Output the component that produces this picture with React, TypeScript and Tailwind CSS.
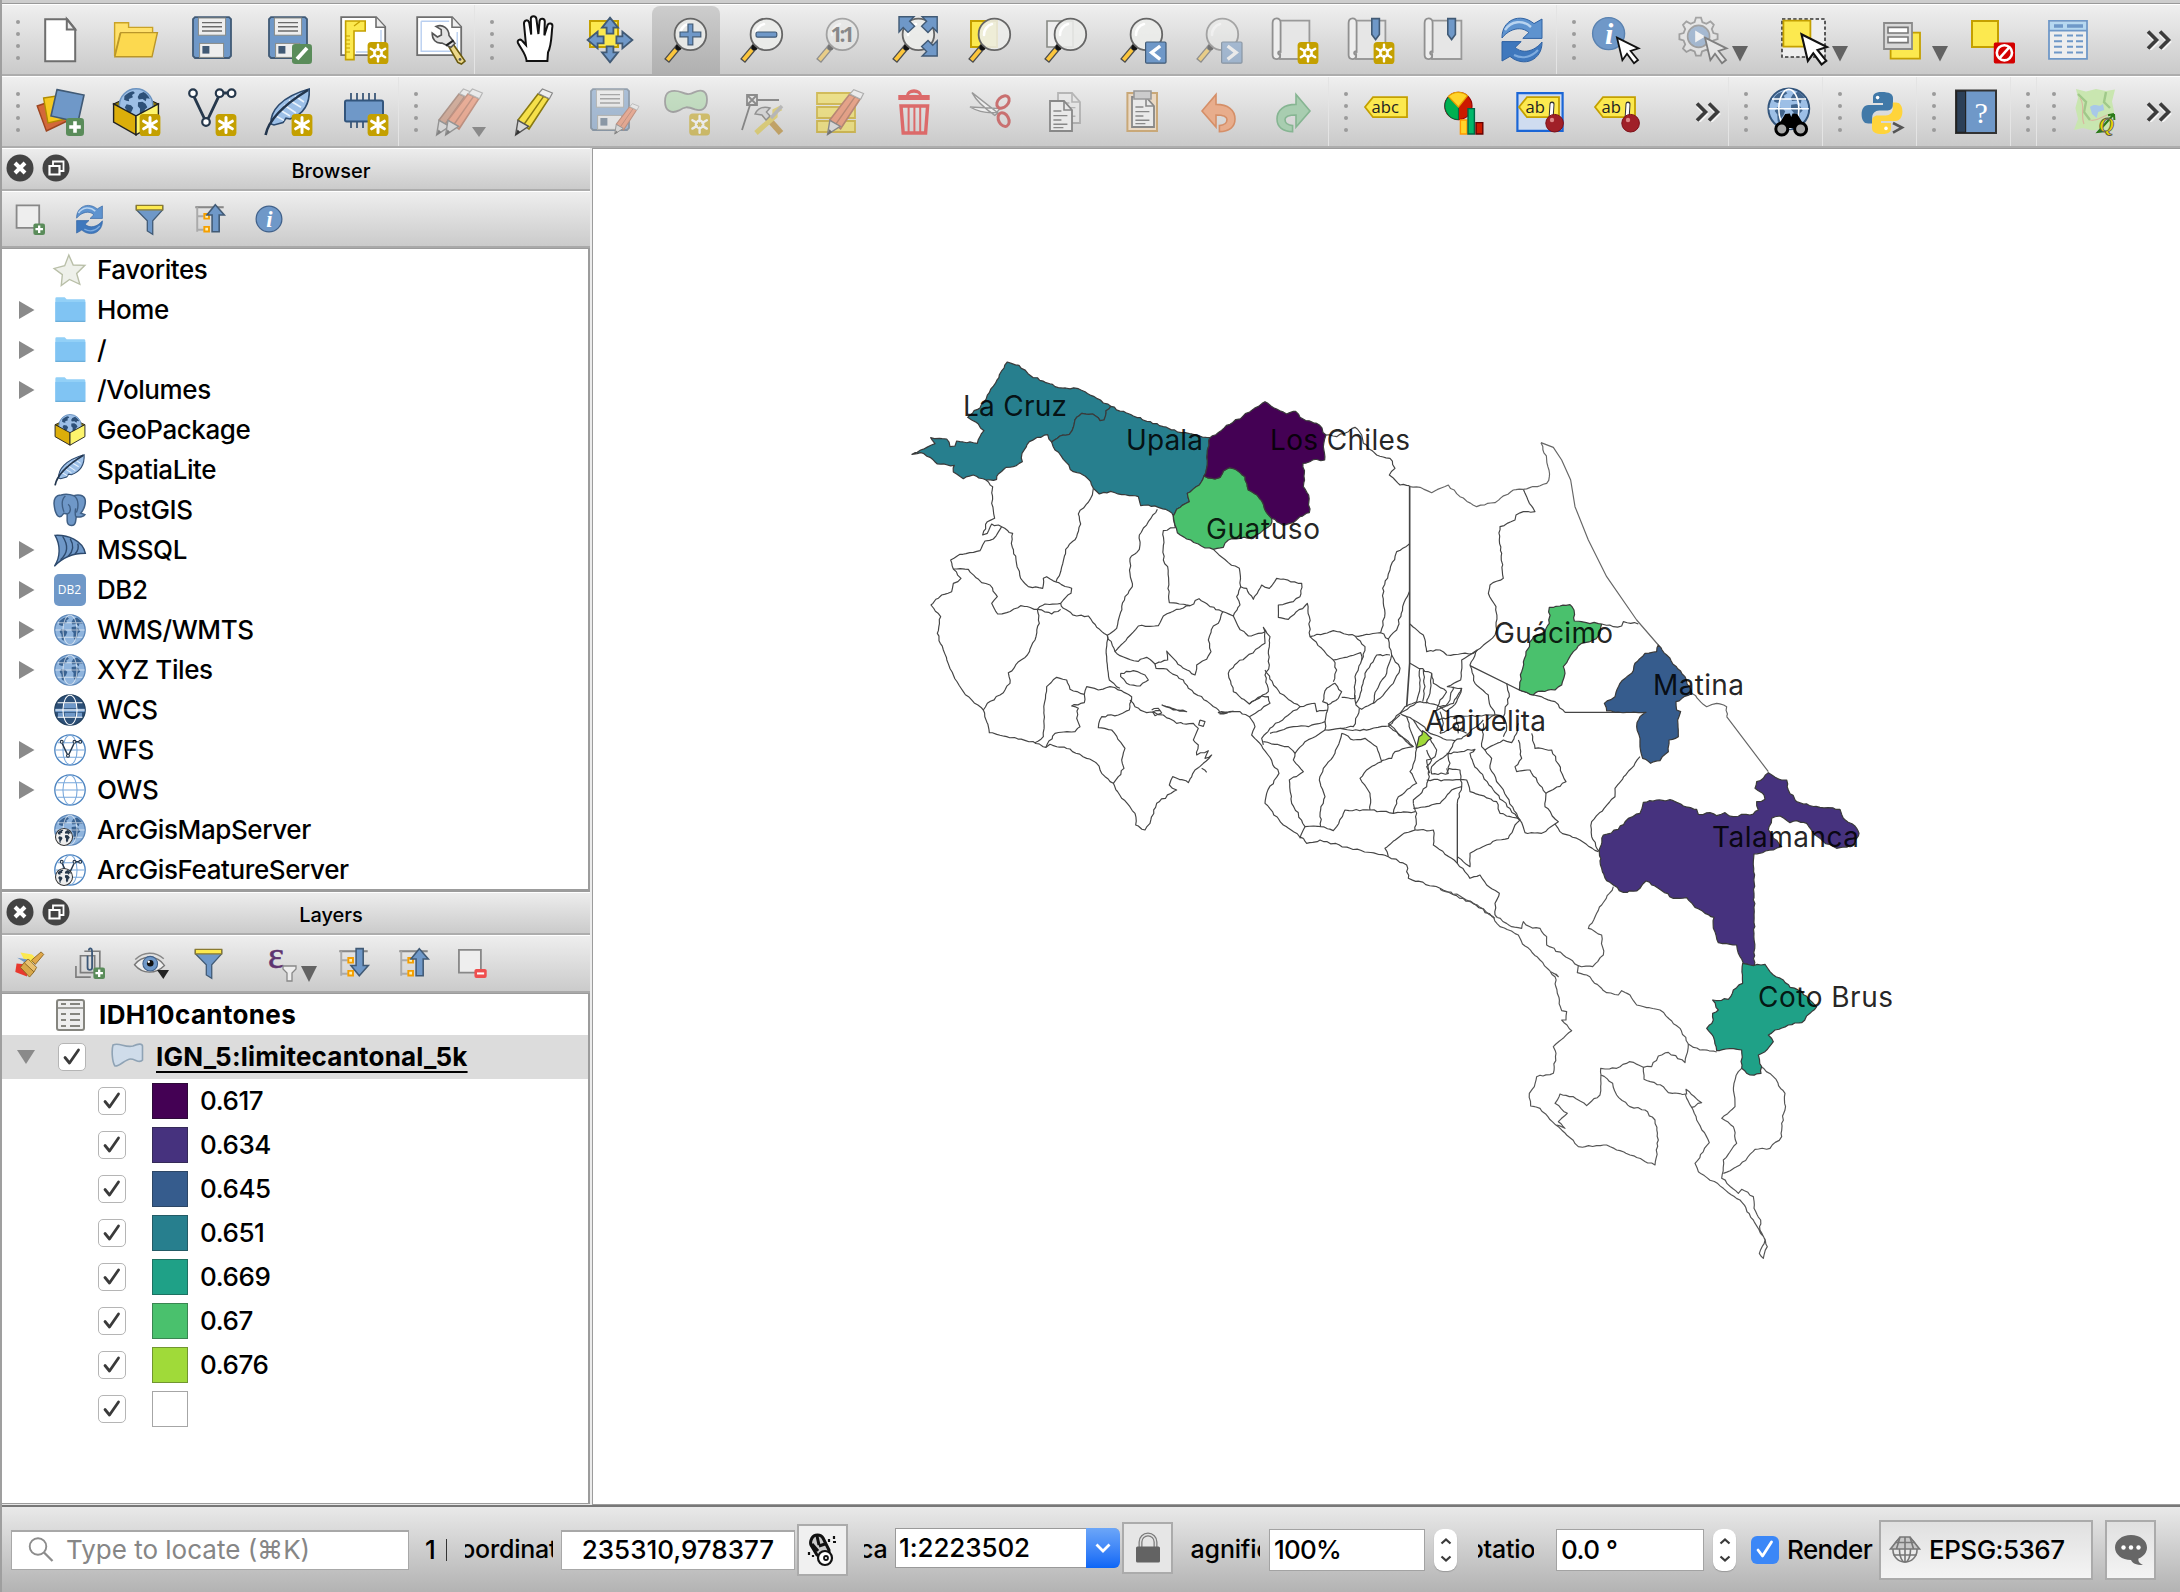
import React from "react";

type IconProps = { size?: number; className?: string };
type Pt = [number, number];

/* ------------------------------------------------------------------ */
/* Icons                                                               */
/* ------------------------------------------------------------------ */

function Svg({ size = 48, className = "", children }: IconProps & { children: React.ReactNode }) {
  return (
    <svg width={size} height={size} viewBox="0 0 24 24" fill="none" className={"shrink-0 overflow-visible " + className}>
      {children}
    </svg>
  );
}

function StarBadge({ solid = false }: { solid?: boolean }) {
  return (
    <g>
      <rect x="13.8" y="13" width="10.4" height="11" rx="1.8" fill="#c4a000" />
      {solid ? (
        <path d="M19 14.8v7.4M15.8 16.6l6.4 3.8M22.2 16.6l-6.4 3.8" stroke="#fff" strokeWidth="1.5" strokeLinecap="round" />
      ) : (
        <g stroke="#fff">
          <path d="M19 14.3v2.6M19 20.1v2.6M15.4 16.4l2.2 1.3M20.4 19.3l2.2 1.3M22.6 16.4l-2.2 1.3M17.6 19.3l-2.2 1.3" strokeWidth="1.2" strokeLinecap="round" />
          <circle cx="19" cy="18.5" r="1.9" strokeWidth="1.1" />
        </g>
      )}
    </g>
  );
}

function PlusBadge() {
  return (
    <g>
      <rect x="15" y="15" width="9" height="9" rx="1.6" fill="#5a8c5a" />
      <path d="M19.5 16.6v5.8M16.6 19.5h5.8" stroke="#fff" strokeWidth="1.8" />
    </g>
  );
}

const NewIcon = () => (
  <Svg>
    <path d="M4.6 1.6h11l4 5v16h-15z" fill="#fff" stroke="#6e6e6e" strokeWidth="1" />
    <path d="M15.4 1.6v5.2h4.2z" fill="#eee" stroke="#6e6e6e" strokeWidth="1" />
  </Svg>
);

const FolderOpenIcon = () => (
  <Svg>
    <path d="M1.3 20V3.4h7v2.3h12v3H4z" fill="#ffe16b" stroke="#c9a227" strokeWidth=".7" />
    <path d="M1.4 20.4 4.4 8.3h18.3L20 20.4z" fill="#fcd94f" stroke="#b9962a" strokeWidth=".7" />
  </Svg>
);

function Floppy({ children }: { children?: React.ReactNode }) {
  return (
    <Svg>
      <path d="M3.5.6h17l1 1V20l-1 1h-17l-1-1V1.600z" fill="#6f98c8" stroke="#415a75" strokeWidth=".9" />
      <rect x="5.2" y="1" width="13.6" height="8.6" fill="#eee" stroke="#888a85" strokeWidth=".5" />
      <path d="M7 3.3h10M7 5.4h10M7 7.500h10" stroke="#6b6b6b" strokeWidth=".7" />
      <rect x="5.800" y="13.700" width="12" height="7" fill="#eee" stroke="#888a85" strokeWidth=".5" />
      <rect x="7.200" y="15" width="3.500" height="3.800" fill="#415a75" />
      {children}
    </Svg>
  );
}

const SaveIcon = () => <Floppy />;
const SaveAsIcon = () => (
  <Floppy>
    <rect x="14" y="14" width="10" height="10" rx="1.600" fill="#5a8c5a" />
    <path d="M16.500 21.500 21.500 16" stroke="#fff" strokeWidth="1.900" />
  </Floppy>
);

const LayoutIcon = () => (
  <Svg>
    <path d="M.6.6h17.500l4.500 4.800v14.200H.6z" fill="#fff" stroke="#6e6e6e" strokeWidth=".9" />
    <path d="M18 .8v4.800h4.500" stroke="#6e6e6e" strokeWidth=".8" fill="#eee" />
    <path d="M20.500 7v11H8" stroke="#b9cff0" strokeWidth=".7" />
    <path d="M2.800 2.500h9.800v5H7v14.300H2.800z" fill="#fce94f" stroke="#c4a000" strokeWidth=".8" />
    <path d="M3 10h2M3 12h2M3 14h2M3 16h2M3 18h2M7 5l3-2.300" stroke="#c4a000" strokeWidth=".6" />
    <StarBadge />
  </Svg>
);

const LayoutManagerIcon = () => (
  <Svg>
    <path d="M.6.6h17.500l4.500 4.800v14.200H.6z" fill="#fff" stroke="#6e6e6e" strokeWidth=".9" />
    <path d="M18 .8v4.800h4.500" stroke="#6e6e6e" strokeWidth=".8" fill="#eee" />
    <path d="M2.600 2.600h14M2.600 2.600v15h18V8" stroke="#b9cff0" strokeWidth=".7" />
    <path d="m14.500 12 4 2 6 8.500-1.800 1.500-1.800-.8z" fill="#edd98a" stroke="#6a5a10" strokeWidth=".8" />
    <path d="M13 13.500c-3 .4-5-1.800-4.900-5l2.600 2 2-1-.1-2.700L10 5.200c3.500-1.300 6.500 1 6.500 4.500l3 4-2 2z" fill="#e4e4e4" stroke="#555" strokeWidth=".8" />
    <path d="m15 14.800 3.800-2.600" stroke="#222" strokeWidth="1.100" />
    <circle cx="22" cy="21.700" r=".7" fill="#555" />
  </Svg>
);

const HandIcon = () => (
  <Svg className="ml-1">
    <path
      d="M7.300 22.500C7 19 4.500 16.500 3 13.500c-.7-1.500 1.200-2.300 2.200-1L7 14.500 6 4c-.1-2 2-2.500 2.600-.7l1 6L9.400 1.400c0-1.700 2.600-1.800 2.800 0l1 7.600.6-6.500c.3-1.600 2.500-1.500 2.600.2l-.2 7 1.600-5.200c.6-1.300 2.600-.9 2.400.7-.6 4-.2 9-2.200 13l-.3 4.300z"
      fill="#fff" stroke="#111" strokeWidth="1"
    />
  </Svg>
);

const PanIcon = () => (
  <Svg>
    <path d="M2 2.500h14v13H2z" fill="#fce94f" stroke="#c4a000" strokeWidth="1" />
    <path
      d="m12 .8 4 5h-2.300v3h-3.400v-3H8zM12 23.200l4-5h-2.300v-3h-3.400v3H8zM.8 12l5-4.200v2.400h3v3.500h-3v2.500zM23.200 12l-5-4.200v2.400h-3v3.500h3v2.500z"
      fill="#6f98c8" stroke="#415a75" strokeWidth=".9"
    />
  </Svg>
);

function Glass({ children, under, faded = false }: { children?: React.ReactNode; under?: React.ReactNode; faded?: boolean }) {
  return (
    <Svg className={faded ? "opacity-50" : ""}>
      {under}
      <path d="M9 14.500 2.300 22.500" stroke="#4a4a4a" strokeWidth="3.200" />
      <path d="M7 16.900 2.700 22" stroke="#fcc63c" strokeWidth="1.900" />
      <circle cx="8.300" cy="15.600" r="1.500" fill="#111" />
      <circle cx="14.200" cy="9.200" r="7.900" fill="#ecedeb" fillOpacity=".88" stroke="#666" strokeWidth=".9" />
      <path d="M9 9.500a5.500 5.500 0 0 1 4-5.500" stroke="#fff" strokeWidth="1.300" strokeLinecap="round" />
      {children}
    </Svg>
  );
}

const ZoomInIcon = () => (
  <Glass>
    <path d="M13 4h2.400v4h4v2.400h-4v4H13v-4H9V8h4z" fill="#6f98c8" stroke="#415a75" strokeWidth=".6" />
  </Glass>
);
const ZoomOutIcon = () => (
  <Glass>
    <rect x="9" y="8" width="10.400" height="2.600" rx=".8" fill="#6f98c8" stroke="#415a75" strokeWidth=".6" />
  </Glass>
);
const ZoomNativeIcon = () => (
  <Glass faded>
    <text x="14.200" y="13" textAnchor="middle" fontSize="10.500" fontWeight="700" fontFamily="Open Sans, sans-serif" textLength="12" fill="#333">1:1</text>
  </Glass>
);
const ZoomFullIcon = () => (
  <Glass>
    <g fill="#6f98c8" stroke="#415a75" strokeWidth=".7">
      <path d="M4.500.4h7.500L9.800 2.600l2.500 2.500L9 8.200 6.600 5.800 4.500 8z" />
      <path d="M23.600.4h-7.500l2.200 2.200-2.500 2.500L19 8.200l2.400-2.400L23.600 8z" />
      <path d="M23.600 20h-7.500l2.200-2.200-2.500-2.500L19 12.200l2.400 2.400 2.200-2.200z" />
    </g>
  </Glass>
);
const ZoomSelectionIcon = () => (
  <Glass under={<path d="M2.500 2.500h13v13h-13z" fill="#fce94f" stroke="#c4a000" strokeWidth="1" />} />
);
const ZoomLayerIcon = () => (
  <Glass under={<path d="M2.500 2.500h13v13h-13z" fill="#eee" stroke="#888a85" strokeWidth=".8" />} />
);
function ZoomHistory({ faded = false }: { faded?: boolean }) {
  return (
    <Glass faded={faded}>
      <rect x="13.800" y="13" width="10.200" height="10.600" rx=".6" fill="#6f98c8" stroke="#415a75" strokeWidth=".6" />
      <path d={faded ? "m16.800 15 4.300 3.300-4.300 3.400" : "m21.100 15-4.300 3.300 4.300 3.400"} stroke="#fff" strokeWidth="1.700" />
    </Glass>
  );
}

function MapSheet({ bookmark = false, badge = false }: { bookmark?: boolean; badge?: boolean }) {
  return (
    <Svg className="ml-0.5">
      <path d="M4.500 2.300h14.700V21.500H4.500z" fill="#e6e6e6" stroke="#999" strokeWidth=".9" />
      <path d="M.8 19.500V3.500C.8.500 4.800.4 4.800 3.300V17.800c-1.500-.6-1.700 1.500-.2 1.700.2 2.800-3.800 2.600-3.800 0z" fill="#eee" stroke="#909090" strokeWidth=".9" />
      {bookmark && <path d="M12.400 1.300h3.800v8l-1.900 2.500-1.900-2.500z" fill="#6f98c8" stroke="#415a75" strokeWidth=".8" />}
      {badge && <g transform="translate(-.5 0)"><StarBadge /></g>}
    </Svg>
  );
}

function RefreshIcon({ size }: IconProps) {
  return (
    <Svg size={size}>
      <path d="M2 11C1.800 2 11-2 18 3.800L22 1.500v9.700h-9.600l3-2.900C12 5 6 6 2 11z" fill="#5e93cf" stroke="#2f62a3" strokeWidth=".5" />
      <path d="M22 13c.2 9-9 13-16 7.200L2 22.500v-9.700h9.600l-3 2.900c3.400 3.300 9.400 2.300 13.400-2.700z" fill="#3f78bd" stroke="#2f62a3" strokeWidth=".5" />
      <path d="M3.500 7C6.500 2.300 12.500 1.800 16.500 5.500" stroke="#b9d4f0" strokeWidth="1.200" />
      <path d="M8 19.500c4.500 2.300 9 .8 12-2.500" stroke="#7facdf" strokeWidth="1" />
    </Svg>
  );
}

const Cursor = ({ fill = "#fff", stroke = "#111" }: { fill?: string; stroke?: string }) => (
  <path d="m12.500 10.800 10.800 5.400-4 1.300 3.700 4.500-2 1.600-3.500-4.700-2.300 3.200z" fill={fill} stroke={stroke} strokeWidth=".9" />
);

const IdentifyIcon = () => (
  <Svg>
    <circle cx="8.300" cy="8.800" r="8" fill="#6f98c8" stroke="#5a82b0" strokeWidth=".7" />
    <text x="8.600" y="14.200" textAnchor="middle" fontSize="15" fontStyle="italic" fontWeight="700" fontFamily="Liberation Serif, serif" fill="#fff">i</text>
    <Cursor />
  </Svg>
);
const ActionIcon = () => (
  <Svg className="opacity-60">
    <path d="M8 .8h2.500l.7 2.300 2 .8 2-1.200 1.700 1.700-1 2.100.8 2 2.100.6v2.400l-2.100.7-.9 2 1 2.100-1.700 1.700-2-1.100-2.100.8-.6 2.100H8l-.7-2.100-2-.8-2.100 1.100-1.700-1.700 1.100-2.100-.8-2-2.100-.6V9.100l2.100-.6.800-2-1.100-2.100 1.700-1.700 2.100 1.200 2-.9z" fill="#e8e8e8" stroke="#777" strokeWidth=".9" />
    <circle cx="9.300" cy="10.200" r="5.500" fill="#7fa0c8" stroke="#777" strokeWidth=".8" />
    <path d="m7.600 7.300 5 3-5 3z" fill="#fff" />
    <Cursor fill="#eee" stroke="#444" />
  </Svg>
);
const SelectIcon = () => (
  <Svg>
    <path d="M1 1.500h21.500V20.500H1z" fill="#eee" stroke="#333" strokeWidth=".8" strokeDasharray="1.700 1.100" />
    <path d="M1.700 2.300h13.500v13H1.700z" fill="#fce94f" stroke="#c4a000" strokeWidth=".9" />
    <g transform="translate(-4 -3.600) scale(1.180)"><Cursor /></g>
  </Svg>
);
const SelectValueIcon = () => (
  <Svg>
    <path d="M5.300 8.300h14.700v13H5.300z" fill="#fce94f" stroke="#c4a000" strokeWidth=".9" />
    <path d="M2 3.500h14v13H2z" fill="#d8d8d8" stroke="#8a8a8a" strokeWidth=".9" />
    <path d="M4 5.700h10v2.800H4zM4 10.500h10v2.800H4z" fill="#fff" stroke="#777" strokeWidth=".8" />
  </Svg>
);
const DeselectIcon = () => (
  <Svg>
    <path d="M2 2.500h13v13H2z" fill="#fce94f" stroke="#c4a000" strokeWidth="1" />
    <rect x="12.900" y="13.200" width="10.600" height="10.500" rx=".8" fill="#d40000" />
    <circle cx="18.200" cy="18.400" r="3.800" stroke="#fff" strokeWidth="1.300" />
    <path d="m15.700 21.200 5-5.600" stroke="#fff" strokeWidth="1.300" />
  </Svg>
);
const TableIcon = () => (
  <Svg>
    <path d="M2.500 2.400h19v19h-19z" fill="#eee" stroke="#6f98c8" strokeWidth=".9" />
    <path d="M3 3h18v4H3z" fill="#b7d8f0" />
    <path d="M2.500 7.300h19" stroke="#6f98c8" strokeWidth=".8" />
    <path d="M5 5h4.500M11.500 5h8" stroke="#6f98c8" strokeWidth="1.800" />
    <path d="M5 9.800h4M11.500 9.800h3M16 9.800h3.500M5 12.600h4M11.500 12.600h3M16 12.600h3.500M5 15.400h4M11.500 15.400h3M16 15.400h3.500M5 18.300h4M11.500 18.300h3M16 18.300h3.500" stroke="#6f98c8" strokeWidth="1" />
  </Svg>
);

const AddLayerIcon = () => (
  <Svg>
    <path d="m.6 9 13-4.500 2 12L5.200 21.500z" fill="#d3683a" stroke="#9c4520" strokeWidth=".7" />
    <path d="m3.800 5 13-2 .5 12L6 17.500z" fill="#f5c920" stroke="#b08b00" strokeWidth=".7" />
    <path d="M10.500.8 24 3.500 21 17 7.500 14z" fill="#6f98c8" stroke="#415a75" strokeWidth=".8" />
    <PlusBadge />
  </Svg>
);

function Continents({ fill = "#2d5078" }: { fill?: string }) {
  return (
    <g fill={fill}>
      <path d="M4 5.500c1.800-2 4-3 6-3.300l1.200 1.300-2 1.300.6 1.500-2.800 1.200.2 1.500-1.800-.2L3.800 8zM5.500 11.200l3 .6 1.500 1.700-1 2.400-1.500 1.700-.3 2.700-1.400-1.300-.2-3.700-1.400-2z" />
      <path d="m14.300 4 2.800-1.300c2 1.100 3.500 2.600 4.300 4.700l-2.300-.3-.5 2-2.200-1.600-2.600.3-.7-1.700zM13.300 9.800l3-.4 2.100 1.400 1.300 2.300-1.700 1.600-.7 3-1.700 1.800-1.100-2.300.2-3-1.500-1.700z" />
    </g>
  );
}

function BoxIcon({ size, badge = false }: IconProps & { badge?: boolean }) {
  return (
    <Svg size={size}>
      <path d="M.8 8 5 6h14l4.200 2L12 14.200z" fill="#8a7400" stroke="#222" strokeWidth=".6" />
      <g transform="translate(3.300 0) scale(.73)">
        <circle cx="12" cy="12" r="11.500" fill="#9dbfe6" stroke="#6b93c0" strokeWidth="1" />
        <Continents />
      </g>
      <path d="M.8 8v9L12 23.400V14z" fill="#dcae0a" stroke="#222" strokeWidth=".7" />
      <path d="M23.200 8v9L12 23.400V14z" fill="#fdf46c" stroke="#222" strokeWidth=".7" />
      {badge && <StarBadge solid />}
    </Svg>
  );
}

function VectorNodes({ w = 1.1, r = 1.9 }: { w?: number; r?: number }) {
  return (
    <g stroke="#26384c" strokeWidth={w} fill="#fff">
      <path d="M3 4.300 8.300 15.500M15.300 4.300 10 15.500M16.500 2.500h4" strokeWidth={w * 1.300} />
      <circle cx="2.500" cy="2.600" r={r} />
      <circle cx="9" cy="17" r={r} />
      <circle cx="15.800" cy="2.600" r={r} />
      <circle cx="21.800" cy="2.600" r={r} />
    </g>
  );
}
const NewVectorIcon = () => (
  <Svg>
    <VectorNodes />
    <StarBadge solid />
  </Svg>
);
function FeatherIcon({ size, badge = false }: IconProps & { badge?: boolean }) {
  return (
    <Svg size={size}>
      <path d="M3.500 18C3 12 8 4.500 22.600.5c.4 7-2.600 12.500-9.600 15l-2-.4-1.500 2.200-4.500 1.200z" fill="#9dc0e8" stroke="#2d4a6e" strokeWidth=".8" />
      <path d="M8 11l5 3M10 8.500l6 4M12.500 6l6 3.600M15.500 4l4.500 3M6 14l4 2.200" stroke="#e8f2fc" strokeWidth=".8" />
      <path d="M.8 23.500C2 17 9 9 22 1" stroke="#22354d" strokeWidth="1.300" />
      {badge && <StarBadge solid />}
    </Svg>
  );
}
const ChipIcon = () => (
  <Svg>
    <path d="M5.500 2.500v4M8.500 2.500v4M11.500 2.500v4M14.500 2.500v4M17.500 2.500v4M5.500 16v4M8.500 16v4M11.500 16v4" stroke="#3c5878" strokeWidth=".9" />
    <rect x="2.500" y="6.300" width="19" height="10.400" rx=".8" fill="#6f98c8" stroke="#33557c" strokeWidth="1" />
    <StarBadge solid />
  </Svg>
);

function Pencil({ body, dark }: { body: string; dark: string }) {
  return (
    <g>
      <path d="m14 3 5.500 2.200L9.500 20.500 4 16z" fill={body} stroke={dark} strokeWidth=".8" />
      <path d="m16.800 4.200-10 14.300" stroke={dark} strokeWidth=".7" />
      <path d="m4 16.200 5.300 3-6.500 4.300z" fill="#d8d8d8" stroke="#555" strokeWidth=".7" />
      <path d="m3.800 20.800-1.200 3 2.600-1.700z" fill="#333" />
      <path d="m14.200 2.800 2-2.300 5 2-1.500 2.900z" fill="#eee" stroke="#888" strokeWidth=".6" />
    </g>
  );
}
const CurrentEditsIcon = () => (
  <Svg className="ml-1 opacity-50">
    <g transform="translate(-2.500 0)"><Pencil body="#c07a5a" dark="#7c4a34" /></g>
    <g transform="translate(2 0)"><Pencil body="#ef7a50" dark="#a34a2a" /></g>
  </Svg>
);
const PencilIcon = () => <Svg><Pencil body="#f6e04a" dark="#8a7a10" /></Svg>;
const SaveEditsIcon = () => (
  <div className="flex opacity-50">
    <Floppy>
      <g transform="translate(12.500 7.500) scale(.66)"><Pencil body="#ef7a50" dark="#a34a2a" /></g>
    </Floppy>
  </div>
);
const AddPolygonIcon = () => (
  <Svg className="opacity-50">
    <path d="M3.500 2C9-.5 11 5 16 2.200c4-2 6.500-.5 6.500 3.500 0 5-3 6-6 5-4-1.500-5-1.500-8 .5-4 2-7 0-7-4.500C1.500 4 2 2.800 3.500 2z" fill="#a3d6a0" stroke="#666" strokeWidth=".9" />
    <g transform="translate(-.2 -.3)"><StarBadge /></g>
  </Svg>
);
const VertexIcon = () => (
  <Svg className="ml-1 opacity-55">
    <path d="M3.500 3.500h5v5h-5zM3.500 3.500l5 5M8.500 3.500l-5 5M8.500 6h11M5 8.500 1 21" stroke="#444" strokeWidth=".9" />
    <path d="m12 13 8.500 9.500" stroke="#b07a10" strokeWidth="3" />
    <path d="m20.500 10-3 1.500v2.500L8 22.500" stroke="#d9c030" strokeWidth="2.600" />
    <path d="M7.500 13c1.500-3 4-4 7.500-3l-1.800 2 1.800 2-2 2-2-2.500z" fill="#ccc" stroke="#555" strokeWidth=".7" />
    <path d="m15.500 15 5.500-6" stroke="#999" strokeWidth="1.700" />
  </Svg>
);
const MultiEditIcon = () => (
  <Svg className="opacity-60">
    <path d="M1.500 2.500h19V8h-19zM1.500 9.500h19V15h-19zM1.500 16.500h19V22h-19z" fill="#f0dc50" stroke="#c4a000" strokeWidth=".9" />
    <g transform="translate(4 .3) scale(.98)"><Pencil body="#e87a50" dark="#a05030" /></g>
  </Svg>
);
const TrashIcon = () => (
  <Svg>
    <path d="M4.500 3.800h15v1.800h-15zM8.300 4c0-4 7.400-4 7.400 0" fill="#dc6a6a" stroke="#dc6a6a" strokeWidth=".7" />
    <path d="M9.500 3.500c.5-1.500 4.500-1.500 5 0z" fill="#dfdfdf" />
    <path d="M5.500 9h13.300l-1 13.500H6.600z" stroke="#dc6a6a" strokeWidth="1.700" />
    <path d="M9.300 9v13M12.200 9v13M15.100 9v13" stroke="#dc6a6a" strokeWidth="1" />
  </Svg>
);
const ScissorsIcon = () => (
  <Svg className="ml-1">
    <path d="M2 2.300 15 12.500l-1.600 1.200C9.500 11 4.500 7 2 2.300zM1 9.500l15 .8-1.800 2C9 12.700 4.500 11.500 1 9.500z" fill="#eee" stroke="#999" strokeWidth=".7" />
    <ellipse cx="17.500" cy="7" rx="3.600" ry="2.500" transform="rotate(-45 17.500 7)" stroke="#c97070" strokeWidth="1.500" />
    <ellipse cx="17.800" cy="15.800" rx="3.600" ry="2.500" transform="rotate(62 17.800 15.800)" stroke="#c97070" strokeWidth="1.500" />
  </Svg>
);
const Page = ({ x, y }: { x: number; y: number }) => (
  <g transform={`translate(${x} ${y})`}>
    <path d="M0 0h7l4 4.500V15H0z" fill="#e9e9e9" stroke="#888" strokeWidth=".9" />
    <path d="M7 0v4.500h4" stroke="#888" strokeWidth=".8" />
    <path d="M1.700 5h4M1.700 7.300h7M1.700 9.500h4M1.700 11.600h7M1.700 13.300h5" stroke="#888" strokeWidth=".7" />
  </g>
);
const CopyIcon = () => (
  <Svg>
    <g className="opacity-50"><Page x={8} y={2.500} /></g>
    <Page x={4} y={6.500} />
  </Svg>
);
const PasteIcon = () => (
  <Svg>
    <path d="M1.700 2.500h14.800v19H1.700z" fill="#ead9c4" stroke="#c9a878" strokeWidth="1" transform="translate(3 0)" />
    <Page x={7} y={4.500} />
    <path d="M8 1.500h8.500v4H8z" fill="#ccc" stroke="#999" strokeWidth=".8" />
  </Svg>
);
function UndoIcon({ flip = false }: { flip?: boolean }) {
  return (
    <Svg>
      <path
        d="m4 11.500 7-8.300v5c6 0 9.500 2.800 9.500 7.300 0 4-3 6.300-7.800 6.300v-3c2.500-.2 3.800-1.200 3.800-3 0-1.600-1.500-2.300-5.500-2.300v6z"
        fill={flip ? "#a8cdb0" : "#e8ad8c"} stroke={flip ? "#86b592" : "#d58f68"} strokeWidth=".8"
        transform={flip ? "matrix(-1 0 0 1 24 0)" : undefined}
      />
    </Svg>
  );
}

function LabelTag({ text = "abc", w = 18 }: { text?: string; w?: number }) {
  return (
    <g>
      <path d={`M1.500 9.500 5.500 4.600h${w - 2}v10.000h-${w - 2}z`} fill="#fce94f" stroke="#c4a000" strokeWidth=".9" />
      <text x="4.800" y="12.400" fontSize="8.300" fontFamily="Open Sans, sans-serif" fill="#222">{text}</text>
    </g>
  );
}
const LabelIcon = () => <Svg className="-ml-1"><LabelTag w={19} /></Svg>;
const DiagramIcon = () => (
  <Svg>
    <g transform="translate(.7 0)">
      <circle cx="8.500" cy="9" r="6.800" fill="#cc1a00" stroke="#900" strokeWidth=".6" />
      <path d="M8.500 9.500V15.800A6.800 6.800 0 0 1 3.500 4.500z" fill="#00b050" stroke="#064" strokeWidth=".5" />
      <path d="M8.500 9.500 3.500 4.200a7 7 0 0 1 9.500-.3z" fill="#ffd42a" stroke="#e8a200" strokeWidth=".6" />
      <path d="M9.500 16h3.300v7H9.500z" fill="#ffd42a" stroke="#f90" strokeWidth=".7" />
      <path d="M13.300 10.300h3.200V23h-3.200z" fill="#00b86a" stroke="#064" strokeWidth=".7" />
      <path d="M17.300 17.300h3.400V23h-3.400z" fill="#cc1a00" stroke="#600" strokeWidth=".7" />
    </g>
  </Svg>
);
const Pin = () => (
  <g>
    <path d="m18 8-.4 6.500" stroke="#333" strokeWidth="2.500" strokeLinecap="round" />
    <path d="m18 8.200-.4 6" stroke="#fff" strokeWidth="1.500" strokeLinecap="round" />
    <circle cx="19.300" cy="17.600" r="4.400" fill="#a02028" stroke="#7c1018" strokeWidth=".5" />
    <circle cx="18" cy="16" r="1.100" fill="#d88" />
  </g>
);
const LabelPinBoxIcon = () => (
  <Svg>
    <path d="M.7 2.600h22.600v18.800H.7z" fill="#cfdcf0" stroke="#1b66d6" strokeWidth="1.100" />
    <LabelTag text="ab" /><Pin />
  </Svg>
);
const LabelPinIcon = () => <Svg><LabelTag text="ab" /><Pin /></Svg>;

function GlobeIcon({ size, kind = "map", arc = false }: IconProps & { kind?: "map" | "solid" | "wire" | "vector"; arc?: boolean }) {
  const light = kind === "wire" || kind === "vector";
  return (
    <Svg size={size}>
      <circle cx="12" cy="12" r="11.400" fill={light ? "#fff" : kind === "solid" ? "#2d5078" : "#8fb4dd"} stroke={light ? "#4d84c0" : kind === "solid" ? "#22405f" : "#5b86b8"} strokeWidth="1" />
      {kind === "map" && <Continents fill="#3a6392" />}
      {kind === "solid" && <path d="M7 7h10v3.500H7zM1 11h22v2.500H1zM3 14h4v3.500H3zM17 14h4v3.500h-4zM8 14h8v3H8z" fill="#6f98c8" />}
      <g stroke={light ? "#78a8dc" : "#fff"} strokeWidth=".8" opacity={kind === "map" ? 0.6 : 1}>
        <ellipse cx="12" cy="12" rx="5.300" ry="11" />
        <path d="M1 12h22M2.700 6.500h18.600M2.700 17.500h18.600" />
      </g>
      {kind === "vector" && (
        <g transform="translate(4 4) scale(.72)"><VectorNodes w={1.2} r={1.5} /></g>
      )}
      {arc && (
        <g transform="translate(.8 10.500) scale(.56)">
          <circle cx="12" cy="12" r="11.400" fill="#eee" stroke="#333" strokeWidth="1.400" />
          <Continents fill="#26384c" />
        </g>
      )}
    </Svg>
  );
}

const MetaSearchIcon = () => (
  <Svg>
    <circle cx="12.400" cy="10.400" r="10.200" fill="#9dbfe6" stroke="#33557c" strokeWidth="1" />
    <g transform="translate(1.600 -.5) scale(.9)"><Continents fill="#41648c" /></g>
    <g stroke="#fff" strokeWidth=".8"><ellipse cx="12.400" cy="10.400" rx="5" ry="9.700" /><path d="M2.400 10.400h20M4 5.500h17" /></g>
    <g transform="translate(1.600 0)">
      <path d="M4.700 20 9 13l2.300-.2.700 1.700.7-1.700 2.300.2 4.300 7z" fill="#000" />
      <circle cx="7.300" cy="20.500" r="3" stroke="#000" strokeWidth="1.500" fill="#aaa" />
      <circle cx="16.700" cy="20.500" r="3" stroke="#000" strokeWidth="1.500" fill="#aaa" />
    </g>
  </Svg>
);
const PythonIcon = () => (
  <Svg>
    <path d="M11.800 2c-3.500 0-4.300 1.200-4.300 3v2.500h5v1H5.300c-2.300 0-3.500 2-3.500 4.700 0 2.800 1.200 4.500 3.300 4.500h2v-3c0-2 1.500-3.500 3.500-3.500h4.200c1.600 0 2.700-1.200 2.700-2.800V5c0-2-1.800-3-5.700-3z" fill="#4179a8" />
    <path d="M12.200 23c3.500 0 4.300-1.200 4.300-3v-2.500h-5v-1h7.200c2.300 0 3.500-2 3.500-4.700 0-2.800-1.200-4.500-3.300-4.500h-1.500v3c0 2-1.500 3.500-3.500 3.500H9.700C8.100 13.800 7 15 7 16.600V20c0 2 1.800 3 5.200 3z" fill="#ffd43b" />
    <circle cx="9.800" cy="4.800" r=".9" fill="#fff" /><circle cx="14" cy="20.200" r=".9" fill="#fff" />
    <path d="m17.500 17.500 4.500 2.300-4.500 2.500" stroke="#555" strokeWidth="1.300" />
  </Svg>
);
const HelpIcon = () => (
  <Svg>
    <path d="M2 1.300h20V22.500H2z" fill="#6f98c8" stroke="#333" strokeWidth="1" />
    <path d="M2.300 1.600h4.500v20.600H2.300z" fill="#2c4058" stroke="#222" strokeWidth=".6" />
    <text x="14.600" y="17.300" textAnchor="middle" fontSize="15" fontFamily="Liberation Serif, serif" fill="#fff">?</text>
  </Svg>
);
const QuickMapIcon = () => (
  <Svg>
    <path d="m2 .5 5 1.200L12 .5l5 1 4.500-.7-1.500 6 1 5-1 5.500.5 4.500-5.500-1.300-4.500.8-5-1.300L1 21l2-5.500L1.700 10 3 5z" fill="#c9e6b0" />
    <path d="m3 3 4 4-1 5 3 4M17 2l-1 5 3 3" stroke="#a0c98a" strokeWidth="1.200" />
    <path d="M9 9.500c3-2.500 4 .8 6.500-1.500l.6 3-3 1-.8 3-2.300-2z" fill="#a8c8e8" />
    <path d="M4 5c3 4 0 8 2 13M19 13c-4 1-6 4-10 3" stroke="#d8b8a0" strokeWidth=".6" />
    <path d="m21 13-8 9 3-.4M21 13l.2 3M21 13l-3 .6" stroke="#2a7a18" strokeWidth="1" />
    <text x="13.500" y="21.800" fontSize="10.500" fontStyle="italic" fontWeight="700" fontFamily="Liberation Serif, serif" fill="#e8d400" stroke="#555" strokeWidth=".4">Q</text>
  </Svg>
);

const AddSelectedIcon = () => (
  <Svg size={31}>
    <path d="M2 1h17.500v17.500H2z" fill="#eee" stroke="#888" strokeWidth="1.400" />
    <PlusBadge />
  </Svg>
);
const FunnelIcon = () => (
  <Svg size={31}>
    <path d="M1.800 1.500h20.400v3L14.500 13v10.500l-4.200-2.600V13L1.800 4.500z" fill="#6f98c8" stroke="#415a75" strokeWidth="1" />
    <path d="M1.800 1h20.400v3.500H1.800z" fill="#fce94f" stroke="#8a7a30" strokeWidth="1" />
  </Svg>
);
function TreeIcon({ down = false }: { down?: boolean }) {
  return (
    <Svg size={31}>
      <path d="M1 2.500h22" stroke="#888" strokeWidth="1.600" />
      <path d="M2.500 2.500v19M2.500 9.500h5M2.500 20h5" stroke="#aaa" strokeWidth="1.500" />
      <path d="M8 7.700h3.600v3.600H8zM8 17.700h3.600v3.600H8z" stroke="#f59f00" strokeWidth="1.500" fill="#fff0b0" />
      <path d="M16.500.5 23.500 8.500h-4v13h-5.500v-13h-4z" transform={down ? "matrix(1 0 0 -1 0 22)" : undefined} fill="#6f98c8" stroke="#415a75" strokeWidth="1.200" />
    </Svg>
  );
}
const InfoIcon = () => (
  <Svg size={30}>
    <circle cx="12" cy="12" r="10.300" fill="#6f98c8" stroke="#41618a" strokeWidth="1" />
    <text x="12.300" y="18.500" textAnchor="middle" fontSize="18" fontStyle="italic" fontWeight="700" fontFamily="Liberation Serif, serif" fill="#fff">i</text>
  </Svg>
);
const StyleIcon = () => (
  <Svg size={31}>
    <path d="m5 3.500 9 1.500 3 3-6 7z" fill="#fce94f" />
    <path d="M2.500 7.500 12 9l1 5z" fill="#6f98c8" />
    <path d="m2 12 10 1-2 9-9-3.500z" fill="#e8392e" />
    <path d="m8 11 7.500 7.500-3.500 4L5 15z" fill="#d8a84a" stroke="#8a6420" strokeWidth=".7" />
    <path d="m11 8.500 6.500 6.500-2 3.500L8 11.500z" fill="#e8c070" stroke="#8a6420" strokeWidth=".7" />
    <path d="m13.500 9.500 7.500-6.500 2 2-6.500 7.700z" fill="#e0a84a" stroke="#8a6420" strokeWidth=".7" />
  </Svg>
);
const AddGroupIcon = () => (
  <Svg size={31}>
    <path d="M8 2.500h12V17M5 6h11v13H5zM1.500 14v8.500H13" stroke="#7d7d7d" strokeWidth="1.300" />
    <path d="M10.500 6v9c0 2.500 3.500 2.500 3.500 0V3c0-3.500-2.500-3.500-2.500-1" stroke="#3c5878" strokeWidth="1.400" />
    <PlusBadge />
  </Svg>
);
const EyeIcon = () => (
  <Svg size={36}>
    <path d="M1 12.500C6 6 16 5.500 21 13 15 19 6.500 19 1 12.500z" fill="#eee" stroke="#777" strokeWidth=".9" />
    <path d="M1.500 9C7 3.500 15 3.500 20.500 8.500" stroke="#888" strokeWidth="1" />
    <circle cx="11.500" cy="11.800" r="4.900" fill="#6f98c8" stroke="#41618a" strokeWidth=".7" />
    <circle cx="11.500" cy="11.500" r="2.200" fill="#111" />
    <circle cx="10.500" cy="10.500" r=".8" fill="#fff" />
    <path d="M16 16h8l-3.800 6z" fill="#222" />
  </Svg>
);
const RemoveIcon = () => (
  <Svg size={31}>
    <path d="M1.500 1.500h17V19h-17z" fill="#eee" stroke="#888" strokeWidth="1.400" />
    <rect x="13.500" y="16.200" width="9.500" height="7" rx="1.500" fill="#ef4f4f" />
    <path d="M15.500 19.700h5.500" stroke="#fff" strokeWidth="1.600" />
  </Svg>
);

const StarIcon = () => (
  <Svg size={33}>
    <path d="m11.500.8 3.200 7.200 8.500.2-6 6L19.500 22 12 18.500 6 23l.8-8L.8 10.500l7.700-2z" fill="#eef0ea" stroke="#b9bfa8" strokeWidth="1" />
  </Svg>
);
const FolderIcon = () => (
  <Svg size={32}>
    <path d="M1 3.500q0-1 1-1h6l1.500 1.500H22.500q1 0 1 1V20q0 1-1 1H2q-1 0-1-1z" fill="#92d0f7" />
    <path d="M1 6h22.500v14.500H1z" fill="#80c4f3" />
    <path d="M1 20.500h22.500" stroke="#6aadd8" strokeWidth=".9" />
  </Svg>
);
const ElephantIcon = () => (
  <Svg size={33}>
    <path d="M6 .7C2 .7.500 3.500.8 7.500c.3 4 1.700 9 4 9 1.500 0 2-1 3-2.500l2.500.5v5c.2 4.500 5.800 4.500 6.200 0l.4-3c2.500.5 5.500 0 6.300-1.500l-3-1c2.500-3 4-7.500 3-10.500-1-2.700-5-3.300-8-2.200C12.500.3 8.500 0 6 .7z" fill="#6f98c8" stroke="#3f5f85" strokeWidth="1.100" />
    <path d="M9 1.500C6 4 6.500 9 8 13M15.500 1.500C19 4 18.500 10 17 13.500M10.500 14.500C13.500 13 13 9 11 7.500M16.500 16.500c-.5-2-.5-4 0-6" stroke="#3f5f85" strokeWidth="1" />
  </Svg>
);
const MssqlIcon = () => (
  <Svg size={33}>
    <path d="M1.500 1c9-.5 20 3.500 22 13-9 0-17 3.500-22.500 9.500C5.500 17 5.500 8 1.500 1z" fill="#6f98c8" stroke="#2d4a6e" strokeWidth="1" />
    <path d="M7 1.800c4 6 4 12-1.500 17M12.500 3.300c3 5 2.500 9-1.500 13M18 7c1 3 0 5.500-2 7.500" stroke="#2d4a6e" strokeWidth="1" />
  </Svg>
);
const Db2Icon = () => (
  <div className="flex size-8 items-center justify-center rounded-[5px] bg-[#6f98c8] font-['Open_Sans',sans-serif] text-[12px] text-white">DB2</div>
);

/* ------------------------------------------------------------------ */
/* Toolbar parts                                                       */
/* ------------------------------------------------------------------ */

function Segment({ children, last = false, className = "" }: { children?: React.ReactNode; last?: boolean; className?: string }) {
  return (
    <div className={"flex h-full shrink-0 items-center " + (last ? "grow " : "border-r border-[#e4e4e4] ") + className}>
      <div className="flex w-[25px] shrink-0 flex-col items-center gap-2 pl-2">
        {[0, 1, 2, 3].map((i) => (
          <span key={i} className="size-1 rounded-full bg-[#9b9b9b]" />
        ))}
      </div>
      <div className="flex h-full grow items-center gap-2">{children}</div>
    </div>
  );
}

function Tool({ children, active = false }: { children: React.ReactNode; active?: boolean }) {
  return (
    <div className={"flex h-[68px] w-[68px] shrink-0 items-center justify-center " + (active ? "rounded-t-[8px] bg-linear-to-b from-[#cdcdcd] to-[#b0b0b0]" : "")}>
      {children}
    </div>
  );
}

function MenuTool({ children }: { children: React.ReactNode }) {
  return (
    <div className="relative flex h-[68px] w-[92px] shrink-0 items-center justify-center">
      {children}
      <svg width="16" height="16" viewBox="0 0 16 16" className="absolute right-[2px] bottom-[12px]">
        <path d="M0 0h16l-8 15.500z" fill="#636363" />
      </svg>
    </div>
  );
}

function More({ className = "" }: { className?: string }) {
  return (
    <svg width="27" height="20" viewBox="0 0 27 20" fill="none" className={"shrink-0 " + className}>
      <path d="M2 2l8 8-8 8M14 2l8 8-8 8" stroke="#fff" strokeWidth="4" transform="translate(1 2)" opacity=".7" />
      <path d="M2 1.500l8.500 8.500L2 18.500M14 1.500l8.500 8.500-8.500 8.500" stroke="#3c3c3c" strokeWidth="3.600" />
    </svg>
  );
}

function ToolRow({ children }: { children: React.ReactNode }) {
  return (
    <div className="flex h-[72px] shrink-0 border-t border-b-2 border-t-white border-b-[#adadad] bg-linear-to-b from-[#efefef] to-[#cacaca]">
      {children}
    </div>
  );
}

/* ------------------------------------------------------------------ */
/* Side panels                                                         */
/* ------------------------------------------------------------------ */

function PanelTitle({ title }: { title: string }) {
  return (
    <div className="flex h-[43px] shrink-0 items-center border-t border-b-2 border-t-white border-b-[#adadad] bg-linear-to-b from-[#ededed] to-[#cbcbcb] pl-[4px]">
      <svg width="28" height="28" viewBox="0 0 28 28" className="-mt-0.5">
        <circle cx="14" cy="14" r="13.500" fill="#434343" />
        <path d="m9 9 10 10M19 9 9 19" stroke="#fff" strokeWidth="4" />
      </svg>
      <svg width="28" height="28" viewBox="0 0 28 28" fill="none" className="-mt-0.5 ml-2">
        <circle cx="14" cy="14" r="13.500" fill="#434343" />
        <path d="M11 11V7.500h10.500V17H18" stroke="#fff" strokeWidth="1.800" />
        <path d="M7.500 12h10v8.500h-10z" stroke="#fff" strokeWidth="2.200" />
      </svg>
      <div className="grow pt-1 pl-0.5 text-center text-[20px] font-medium">{title}</div>
    </div>
  );
}

function Expander({ open = false, show = true }: { open?: boolean; show?: boolean }) {
  if (!show) return <span className="w-4 shrink-0" />;
  return (
    <svg width="16" height="18" viewBox="0 0 16 18" className="shrink-0 overflow-visible">
      <path d={open ? "M-1 2h18l-9 14z" : "M0 0l15.500 9L0 18z"} fill="#8a8a8a" />
    </svg>
  );
}

const browserItems: { label: string; icon: React.ReactNode; expandable: boolean }[] = [
  { label: "Favorites", icon: <StarIcon />, expandable: false },
  { label: "Home", icon: <FolderIcon />, expandable: true },
  { label: "/", icon: <FolderIcon />, expandable: true },
  { label: "/Volumes", icon: <FolderIcon />, expandable: true },
  { label: "GeoPackage", icon: <BoxIcon size={32} />, expandable: false },
  { label: "SpatiaLite", icon: <FeatherIcon size={32} />, expandable: false },
  { label: "PostGIS", icon: <ElephantIcon />, expandable: false },
  { label: "MSSQL", icon: <MssqlIcon />, expandable: true },
  { label: "DB2", icon: <Db2Icon />, expandable: true },
  { label: "WMS/WMTS", icon: <GlobeIcon size={32} />, expandable: true },
  { label: "XYZ Tiles", icon: <GlobeIcon size={32} />, expandable: true },
  { label: "WCS", icon: <GlobeIcon size={32} kind="solid" />, expandable: false },
  { label: "WFS", icon: <GlobeIcon size={32} kind="vector" />, expandable: true },
  { label: "OWS", icon: <GlobeIcon size={32} kind="wire" />, expandable: true },
  { label: "ArcGisMapServer", icon: <GlobeIcon size={32} arc />, expandable: false },
  { label: "ArcGisFeatureServer", icon: <GlobeIcon size={32} kind="vector" arc />, expandable: false },
];

const classes = [
  { label: "0.617", box: "border-[#2d0a38] bg-[#440154]" },
  { label: "0.634", box: "border-[#352a58] bg-[#46327e]" },
  { label: "0.645", box: "border-[#2c4666] bg-[#365c8d]" },
  { label: "0.651", box: "border-[#235b66] bg-[#277f8e]" },
  { label: "0.669", box: "border-[#1d7161] bg-[#1fa187]" },
  { label: "0.67", box: "border-[#3a8651] bg-[#4ac16d]" },
  { label: "0.676", box: "border-[#71962f] bg-[#a0da39]" },
  { label: "", box: "border-[#a6a6a6] bg-white" },
];

function Check() {
  return (
    <span className="flex h-[28px] w-[28px] shrink-0 items-center justify-center rounded-[5px] border-[1.5px] border-[#b5b5b5] bg-white">
      <svg width="18" height="18" viewBox="0 0 18 18" fill="none">
        <path d="m2 9.500 4.500 5.500L15.500 2" stroke="#3a3a3a" strokeWidth="2.800" strokeLinecap="round" strokeLinejoin="round" />
      </svg>
    </span>
  );
}

const panelText = "text-[26px] font-medium tracking-[-0.4px]";

function SidePanels() {
  return (
    <div className="flex w-[588px] shrink-0 flex-col">
      <PanelTitle title="Browser" />
      <div className="flex h-[57px] shrink-0 items-center gap-[29px] border-t border-b-2 border-t-white border-b-[#a9a9a9] bg-linear-to-b from-[#eeeeee] to-[#cbcbcb] pl-[12px]">
        <AddSelectedIcon />
        <RefreshIcon size={31} />
        <FunnelIcon />
        <TreeIcon />
        <InfoIcon />
      </div>
      <div className="flex h-[643px] shrink-0 flex-col overflow-hidden border-t border-r-2 border-b-2 border-[#9c9c9c] bg-white">
        {browserItems.map((it) => (
          <div key={it.label} className="flex h-10 shrink-0 items-center pl-[17px] first:mt-px">
            <Expander show={it.expandable} />
            <span className="mr-[11px] ml-[18px] flex w-[33px] shrink-0 justify-center">{it.icon}</span>
            <span className={panelText}>{it.label}</span>
          </div>
        ))}
      </div>
      <div className="h-px shrink-0 bg-[#9c9c9c]" />
      <PanelTitle title="Layers" />
      <div className="flex h-[58px] shrink-0 items-center border-t border-b-2 border-t-white border-b-[#a9a9a9] bg-linear-to-b from-[#eeeeee] to-[#cbcbcb] pl-[12px]">
        <StyleIcon />
        <span className="ml-[29px] flex"><AddGroupIcon /></span>
        <span className="ml-7 flex"><EyeIcon /></span>
        <span className="ml-6 flex"><FunnelIcon /></span>
        <svg width="52" height="36" viewBox="0 0 52 36" className="ml-11 shrink-0 overflow-visible">
          <text x="0" y="22" fontSize="38" fontFamily="Liberation Serif, serif" fill="#5e3470" stroke="#5e3470" strokeWidth=".6">ε</text>
          <path d="M15 20h13v3l-4 4v8h-5v-8l-4-4z" fill="#eee" stroke="#888" strokeWidth="1.300" />
          <path d="M33 20h16l-8 16z" fill="#636363" />
        </svg>
        <span className="ml-[18px] flex"><TreeIcon down /></span>
        <span className="ml-[29px] flex"><TreeIcon /></span>
        <span className="ml-[28px] flex"><RemoveIcon /></span>
      </div>
      <div className="flex grow flex-col border-t border-r-2 border-b border-[#9c9c9c] bg-white">
        <div className="flex h-[41px] shrink-0 items-center pl-[54px]">
          <svg width="29" height="32" viewBox="0 0 29 32" fill="none">
            <rect x="1" y="1" width="27" height="30" rx="2" fill="#eee" stroke="#85857f" strokeWidth="2" />
            <path d="M1 9h27" stroke="#85857f" strokeWidth="1.500" />
            <path d="M5 5h5M14 5h10M5 15h5M14 15h10M5 21h5M14 21h10M5 27h5M14 27h10" stroke="#85857f" strokeWidth="2" />
          </svg>
          <span className="ml-[14px] text-[26px] font-bold tracking-[0.35px]">IDH10cantones</span>
        </div>
        <div className="flex h-11 shrink-0 items-center bg-[#dcdcdc] pl-4">
          <Expander open />
          <span className="mr-[25px] ml-[24px]"><Check /></span>
          <svg width="33" height="26" viewBox="0 0 33 26" className="-mt-1">
            <path d="M2 3c6-3 12 3 20 1 5-2 9-3 9.500 0v14c-3 4-7-1-12-1S8 25 4 24C1 20 .5 8 2 3z" fill="#cfdcea" stroke="#8fa3b5" strokeWidth="1.600" />
          </svg>
          <span className="ml-[12px] text-[26px] font-bold tracking-[0.2px] underline decoration-2 underline-offset-[5px] [text-decoration-skip-ink:none]">IGN_5:limitecantonal_5k</span>
        </div>
        {classes.map((c) => (
          <div key={c.label} className="flex h-11 shrink-0 items-center pl-[96px]">
            <Check />
            <span className={"mr-3 ml-[26px] size-9 border-[1.5px] " + c.box} />
            <span className={panelText}>{c.label}</span>
          </div>
        ))}
      </div>
      <div className="h-px shrink-0 bg-[#e8e8e8]" />
    </div>
  );
}

/* ------------------------------------------------------------------ */
/* Map                                                                 */
/* ------------------------------------------------------------------ */

/** Deterministic pseudo-random value in -1..1 for a coordinate pair. */
function noise(x: number, y: number) {
  const s = Math.sin(x * 12.9898 + y * 78.233) * 43758.5453;
  return (s - Math.floor(s)) * 2 - 1;
}

/** Subdivides a polyline so administrative borders look naturally uneven. */
function border(src: string, closed = false): string {
  const n = src.trim().split(/\s+/).map(Number);
  const pts: Pt[] = [];
  for (let i = 0; i < n.length; i += 2) pts.push([n[i], n[i + 1]]);
  if (closed) pts.push(pts[0]);
  let d = `M${pts[0][0]} ${pts[0][1]}`;
  for (let i = 1; i < pts.length; i++) {
    const [ax, ay] = pts[i - 1];
    const [bx, by] = pts[i];
    const len = Math.hypot(bx - ax, by - ay);
    const steps = Math.max(1, Math.round(len / 11));
    for (let k = 1; k < steps; k++) {
      const t = k / steps;
      const x = ax + (bx - ax) * t;
      const y = ay + (by - ay) * t;
      d += `L${(x + noise(Math.round(x), Math.round(y)) * 2.6).toFixed(1)} ${(y + noise(Math.round(y), Math.round(x)) * 2.6).toFixed(1)}`;
    }
    d += `L${bx} ${by}`;
  }
  return closed ? d + "Z" : d;
}

const westLines = [
  "258 420 278 440 275 490 284 535 262 545 248 585 262 580 275 552 305 560 338 580 334 610 348 660 362 715 385 740 428 745 430 715 440 710 468 726 515 745 513 760 490 780 482 790 435 792 412 808 362 797 320 818 293 822 275 790 292 770 270 735 245 728 205 688 160 687 152 660 180 643 240 632 255 603 280 597 305 560",
  "580 445 572 475 535 522 542 552 530 590 497 628 488 672 468 726",
  "772 508 745 545 718 585 718 628 690 655 690 700 697 740 675 770 658 830 650 865 622 886",
  "820 528 826 563 790 572 790 660 803 680 808 788 870 797 897 776 930 800 968 815 1000 828 1020 795 1010 770 1022 740 1018 685 985 668 940 628",
  "870 797 830 808 790 828 775 857 715 858 645 935 660 947 715 964 740 952 765 972 803 960 800 933 820 955 850 985 885 1005 890 975 920 958 933 935 925 900 940 858 955 850 968 815",
  "482 790 490 805 530 828 565 828 590 862 622 886 645 935",
  "412 808 455 822 482 808",
  "412 808 418 850 405 900 382 945 325 998 330 1030 300 1065 262 1090 250 1110",
  "160 687 183 715 160 730 155 755 125 765 93 795 122 830 112 880 130 930 160 1005 190 1055 250 1110 268 1178 320 1190 400 1205 438 1222 450 1213 510 1227 590 1270 605 1300 640 1330 665 1375 705 1420 707 1455 735 1470 750 1450 770 1390 830 1350 808 1335 818 1310 865 1328 885 1290 910 1270 935 1245 915 1255 925 1232 890 1245 895 1215 880 1200 895 1165 880 1150 830 1150 790 1125 765 1118 740 1118 705 1100 690 1080",
  "622 886 620 950 628 1020 660 1045",
  "405 1208 430 1190 432 1110 440 1040 470 1012 500 1020 510 1048 553 1063 553 1088 515 1098 535 1105 530 1135 540 1160 525 1175 465 1180 438 1222",
  "553 1063 560 1040 595 1050 630 1040 665 1052 695 1070 688 1110 655 1125 605 1130 595 1163 635 1170 675 1225 665 1260 672 1285 655 1310 640 1330",
  "662 1000 700 992 735 1005 745 1020 720 1038 680 1030 662 1010 662 1000",
  "755 1110 775 1105 785 1119 765 1127 758 1116 780 1112",
  "785 1095 810 1102 860 1115 820 1110 785 1095",
  "900 1140 915 1145 910 1159 896 1155 900 1140",
  "905 1285 920 1297",
  "765 972 768 985 800 987 850 1020 865 1045 950 1105 960 1122 1000 1114 955 1118 1020 1115 1048 1130 1065 1160 1055 1185 1085 1217 1137 1300 1100 1360 1095 1390 1150 1455 1210 1495",
  "1000 828 1015 860 1045 888 1075 880 1095 875 1090 862 1110 890 1105 940 1108 975 1095 1005 1105 1055 1048 1092 1000 1055 985 1000 1010 970 1095 910 1095 875",
  "1095 990 1140 1060 1200 1100 1245 1090 1250 1115 1283 1110 1282 1090 1268 1085 1280 1045 1305 1030 1325 1055 1315 1075 1282 1095",
  "1048 1130 1110 1090 1105 1070 1085 1068 1048 1092",
  "1022 740 1040 745 1060 778 1085 735 1108 745 1130 715 1205 730 1200 770 1180 785 1135 795 1135 832 1165 838 1222 790 1228 830 1230 890 1300 872 1365 888 1442 878 1465 897",
  "1230 890 1265 925 1300 960 1370 942 1382 938 1385 960 1365 1010 1365 1075 1325 1072",
  "1365 888 1395 920 1390 950 1385 960",
  "1300 960 1310 990 1300 1025",
  "1528 612 1490 635 1470 690 1448 745 1455 820 1442 878",
  "1528 755 1508 800 1490 870 1465 897 1475 945 1500 985 1480 1030 1440 1075 1385 1108 1368 1095 1365 1065",
  "1470 945 1430 945 1395 1000 1385 1050 1368 1090",
  "1475 945 1460 1000 1430 1050 1420 1090",
  "1200 1100 1110 1165 1085 1195 1090 1215",
  "1110 1180 1180 1160 1225 1160 1275 1145 1283 1110",
  "1275 1145 1275 1170 1320 1165 1360 1160 1378 1105",
  "1275 1170 1215 1205 1185 1240 1165 1220 1090 1205",
  "1320 1165 1380 1172 1465 1158 1500 1125",
  "1185 1240 1180 1260 1210 1295 1168 1320 1175 1390 1215 1460 1262 1460 1300 1472 1310 1460 1335 1410 1410 1410 1480 1420 1545 1415",
  "1215 1460 1200 1495",
  "1325 1180 1305 1240 1270 1285 1258 1320 1275 1370 1262 1410 1262 1460",
  "1325 1180 1360 1200 1395 1195 1430 1220 1445 1265 1400 1290 1380 1315 1410 1360 1410 1410",
  "1445 1262 1475 1255 1485 1235 1540 1220 1465 1158",
  "1278 285 1310 290 1345 275 1365 262 1385 285 1390 310 1430 345 1470 355 1485 385 1468 405 1500 435 1528 437",
].map((s) => border(s));

const centerLines = [
  "510 312 550 345 560 395 600 390 620 405 700 400 712 390 765 345 770 330 768 260 745 220 750 195 790 175 785 100 778 60 780 20 825 0 828 -15 850 -25 885 -25 860 -70 850 -92",
  "712 390 690 435 705 490 745 525 752 560 765 585 740 600",
  "712 390 665 420 662 480 622 500 665 505 650 545 620 575",
  "800 490 808 530 795 570 790 590 800 620 790 650",
  "510 430 575 460 580 490 620 515",
  "540 445 540 500 530 545 495 560 480 580",
  "550 450 555 500 548 545",
  "575 460 570 520 560 550",
  "620 515 600 540 590 570",
  "640 500 630 540 615 560 580 575",
  "665 505 640 550 600 560",
  "480 580 510 560 540 545 590 555 620 575",
  "480 580 500 590 545 615 570 640",
  "480 580 445 612 520 680",
  "500 590 515 640 530 685",
  "520 600 540 630 550 640",
  "570 640 620 660 645 662 680 645 730 600",
  "590 600 640 590 760 585 790 590",
  "600 640 640 620 680 640",
  "650 590 655 640",
  "600 575 610 610 600 640",
  "730 610 725 680 735 690 790 660 815 668 830 640 835 610",
  "570 655 590 690 585 710 560 720 568 770 560 800 520 840 520 850",
  "560 690 575 720 560 740 570 760",
  "645 662 625 700 575 740 575 762 625 760 620 745",
  "620 700 705 688 690 700 700 730 760 810 840 900",
  "735 690 755 715 750 745 800 830 840 900",
  "530 685 525 720 510 755 530 790 475 830 460 880",
  "560 780 680 780 690 815 770 845 780 880 840 900",
  "625 745 660 750 665 800 635 810 600 850 520 865",
  "665 800 652 850",
  "625 700 630 730 620 760",
  "520 850 530 880 525 930 580 930 580 975 652 1030 690 1075 720 1065 740 1095 778 1120 765 1150 765 1185",
  "525 930 485 945 435 985 445 1010",
  "190 955 200 970 240 960 330 985 445 1010 500 1035 505 1075 600 1105 700 1150 765 1195",
  "652 1010 690 1040 690 1000 770 960 805 955 825 915 840 900 855 938 905 940 945 912 960 935 1020 960 1075 995",
  "945 912 955 905 915 860 918 820 978 785 935 690 885 685 875 640",
  "918 820 870 750 830 755 825 740 845 715 835 660",
  "1200 710 1125 805 1125 830 1055 905 1055 950 1078 995",
  "838 510 880 525 945 545 975 577",
  "1085 312 1120 320 1145 318 1150 305 1195 312",
].map((s) => border(s));

const southLines = [
  "0 208 60 228 120 262 160 290 180 320 235 345 255 378 300 420 345 470 352 520 365 572 380 575 378 600 365 600 395 632 365 658 340 680 348 700 340 760 290 770 283 800 268 820 272 858 300 865 355 920 380 945 415 980 500 975 570 1005 645 1035 655 960 645 900 615 870 570 860 530 825 518 790 483 765 482 745 530 745 568 725 610 742 635 740 655 708 685 697 735 728 745 672",
  "332 455 355 470 340 460",
  "483 765 480 825 440 857 400 830 360 822 345 850 382 880 355 905 375 925 350 915",
  "165 285 215 320 245 325 250 305 270 320 300 325 320 350 320 375 370 405 415 437 458 440 490 405 485 345 445 325 470 280 485 255 520 200",
  "415 437 412 458 440 465 500 518 535 525 545 512 570 525 590 555 660 570 720 625 745 672 780 690 830 696",
  "610 742 612 778 670 800 685 818 740 822 738 808 785 848 755 862 740 835 735 820",
  "755 862 770 900 808 968 765 1030 775 1055 850 1105 900 1140 940 1200 975 1260 958 1300 970 1315 982 1280 960 1230 962 1200 942 1165 940 1130 905 1108 895 1120 845 1075 850 1020 890 970 880 920 845 895 885 860 882 790 895 755 905 745",
  "963 740 1000 770 1035 820 1035 870 1025 910 1025 950 990 985 945 988 900 1035 850 1060",
].map((s) => border(s));

const eastLines = [
  "90 260 120 262 155 278 205 255 240 290 290 320 345 308 400 270 430 268 500 250 508 230 500 180 483 128",
  "935 880 980 920 1010 910 1040 920 1040 950",
].map((s) => border(s));

const cantons = [
  { at: "translate(900 340) scale(.33333)", fill: "#277f8e", d: "322 66 357 76 392 107 438 128 475 143 535 146 592 176 632 199 618 212 612 240 600 242 578 222 545 220 530 232 520 262 508 283 480 288 455 306 443 284 412 292 388 305 366 340 367 365 340 380 318 382 295 402 290 418 258 420 220 405 190 416 160 396 163 376 112 372 90 352 62 338 36 343 62 330 105 311 92 293 140 297 150 320 165 318 170 303 232 310 240 290 252 272 235 252 203 232 222 212 240 204 258 178 268 158" },
  { at: "translate(900 340) scale(.33333)", fill: "#277f8e", d: "632 199 700 228 790 260 845 278 930 293 922 340 922 375 912 408 898 435 862 460 868 485 830 508 820 528 808 514 775 502 745 495 722 497 715 470 665 464 632 454 598 462 580 445 572 425 548 404 520 395 490 358 465 330 455 306 480 288 508 283 520 262 530 232 545 220 578 222 600 242 612 240 618 212" },
  { at: "translate(900 340) scale(.33333)", fill: "#4ac16d", d: "988 383 1010 390 1035 410 1045 450 1072 466 1090 492 1098 515 1115 535 1112 555 1085 575 1060 590 1020 595 985 600 970 622 940 628 915 624 895 612 860 597 832 578 825 555 820 528 830 508 868 485 862 460 898 435 912 408 945 417 960 412 970 393" },
  { at: "translate(900 340) scale(.33333)", fill: "#440154", d: "1095 185 1130 207 1160 222 1187 214 1200 232 1258 255 1278 285 1270 320 1274 360 1238 360 1209 370 1213 400 1210 440 1226 465 1228 518 1200 530 1180 548 1150 556 1115 535 1098 515 1090 492 1072 466 1045 450 1035 410 1010 390 988 383 970 393 960 412 945 417 912 408 922 375 922 340 930 293 990 253" },
  { at: "translate(1240 520) scale(.33333)", fill: "#a0da39", d: "548 632 575 655 545 678 528 685 535 660" },
  { at: "translate(1240 520) scale(.33333)", fill: "#4ac16d", d: "928 262 960 258 990 254 1002 270 1003 303 1085 312 1080 340 1060 360 1025 370 1000 395 985 418 970 440 975 460 965 495 945 510 895 514 880 525 838 510 845 455 858 395 880 350 915 335 928 310" },
  { at: "translate(1240 520) scale(.33333)", fill: "#365c8d", d: "1255 375 1280 405 1335 470 1355 520 1308 545 1310 570 1322 575 1313 600 1315 650 1287 660 1285 695 1260 722 1232 730 1208 715 1200 680 1200 655 1190 620 1200 590 1218 577 1160 577 1100 573 1093 550 1125 530 1140 490 1175 460 1185 430 1215 400 1250 395" },
  { at: "translate(1380 400) scale(.33333)", fill: "#46327e", d: "1165 1118 1205 1140 1220 1140 1225 1170 1250 1205 1320 1222 1380 1228 1390 1255 1430 1285 1437 1300 1420 1335 1370 1345 1330 1325 1300 1300 1280 1270 1250 1262 1230 1268 1200 1248 1175 1255 1165 1290 1180 1315 1205 1340 1180 1350 1122 1362 1122 1480 1122 1600 1122 1700 1090 1690 1075 1660 1070 1635 1015 1628 1008 1605 1000 1585 1002 1552 975 1540 945 1522 920 1493 880 1495 835 1465 798 1443 780 1465 770 1473 730 1477 700 1455 680 1442 665 1405 658 1355 670 1305 715 1288 745 1255 780 1240 790 1207 830 1200 880 1202 910 1218 950 1228 955 1243 990 1238 1010 1247 1035 1238 1060 1250 1085 1243 1110 1245 1135 1230 1130 1205 1155 1198 1148 1180 1125 1165 1130 1145 1150 1135" },
  { at: "translate(1440 820) scale(.33333)", fill: "#1fa187", d: "908 430 940 437 975 433 990 455 1030 480 1050 502 1085 515 1130 560 1110 580 1085 608 1045 615 1005 630 985 645 1000 665 975 695 955 705 965 740 963 760 930 765 905 745 905 690 880 686 830 692 820 650 800 625 820 600 818 580 835 570 818 540 865 538 880 510 908 490" },
].map((c) => ({ ...c, d: border(c.d, true) }));

const mapLabels: { t: string; x: number; y: number; w: number }[] = [
  { t: "La Cruz", x: 963, y: 416, w: 104 },
  { t: "Upala", x: 1126, y: 450, w: 77 },
  { t: "Los Chiles", x: 1270, y: 450, w: 140 },
  { t: "Guatuso", x: 1206, y: 539, w: 114 },
  { t: "Guácimo", x: 1494, y: 643, w: 119 },
  { t: "Matina", x: 1653, y: 695, w: 91 },
  { t: "Alajuelita", x: 1425, y: 731, w: 121 },
  { t: "Talamanca", x: 1712, y: 847, w: 147 },
  { t: "Coto Brus", x: 1758, y: 1007, w: 135 },
];

function MapCanvas() {
  return (
    <div className="ml-0.5 min-w-0 grow overflow-hidden border-t border-b border-l border-[#9c9c9c] bg-white">
      <svg width="1587" height="1354" viewBox="593 149 1587 1354" fill="none" strokeLinejoin="round" className="block">
        <g stroke="#454545" strokeWidth="3.500">
          <g transform="translate(900 340) scale(.33333)">
            {westLines.map((d, i) => <path key={i} d={d} />)}
            <path d="M1529 437V970L1520 1100" strokeWidth="5" />
          </g>
          <g transform="translate(1240 520) scale(.33333)">
            {centerLines.map((d, i) => <path key={i} d={d} />)}
            <path d="M690 437 838 510M975 577H1218M652 850V1030" strokeWidth="4" />
          </g>
          <g transform="translate(1380 400) scale(.33333)" stroke="#666">
            {eastLines.map((d, i) => <path key={i} d={d} />)}
            <path d="M483 128 520 142 545 180 572 240 585 320 625 420 680 530 770 660 835 735M1040 950 1165 1115" />
          </g>
          <g transform="translate(1440 820) scale(.33333)" stroke="#555">
            {southLines.map((d, i) => <path key={i} d={d} />)}
          </g>
        </g>
        {cantons.map((c, i) => (
          <path key={i} d={c.d} transform={c.at} fill={c.fill} stroke="#3a3a3a" strokeWidth="3.600" />
        ))}
        <g fill="#000" fillOpacity=".87" fontFamily="Inter, sans-serif" fontSize="28">
          {mapLabels.map((l) => (
            <text key={l.t} x={l.x} y={l.y} textLength={l.w}>{l.t}</text>
          ))}
        </g>
      </svg>
    </div>
  );
}

/* ------------------------------------------------------------------ */
/* Status bar                                                          */
/* ------------------------------------------------------------------ */

function Clipped({ text, className, shift }: { text: string; className: string; shift: string }) {
  return (
    <div className={"shrink-0 overflow-hidden text-[25px] font-medium tracking-[-0.2px] whitespace-nowrap " + className}>
      <span className={"inline-block py-1 " + shift}>{text}</span>
    </div>
  );
}

function Stepper({ className = "" }: { className?: string }) {
  return (
    <div className={"flex h-[42px] w-[23px] shrink-0 flex-col items-center justify-between rounded-[9px] bg-white py-[9px] shadow-[0_1px_1px_#999] " + className}>
      <svg width="12" height="7" viewBox="0 0 12 7" fill="none"><path d="m1.500 5.500 4.500-4 4.500 4" stroke="#3a3a3a" strokeWidth="2.200" /></svg>
      <svg width="12" height="7" viewBox="0 0 12 7" fill="none"><path d="m1.500 1.500 4.500 4 4.500-4" stroke="#3a3a3a" strokeWidth="2.200" /></svg>
    </div>
  );
}

const fieldText = "text-[26px] font-medium";

function StatusBar() {
  return (
    <div className="flex h-[87px] shrink-0 items-center border-t-2 border-[#787878] bg-linear-to-b from-[#e9e9e9] to-[#b3b3b3] pl-[9px]">
      <div className="flex h-10 w-[398px] shrink-0 items-center border border-t-2 border-[#a8a8a8] bg-white pl-4">
        <svg width="26" height="26" viewBox="0 0 26 26" fill="none">
          <circle cx="10" cy="9.500" r="8.300" stroke="#8c8c8c" strokeWidth="1.900" />
          <path d="m16 15.500 8.500 8.500" stroke="#8c8c8c" strokeWidth="2.300" />
        </svg>
        <span className="ml-3 text-[26px] text-[#868686]">Type to locate (⌘K)</span>
      </div>
      <span className={"ml-4 w-[14px] shrink-0 " + fieldText}>1</span>
      <span className="ml-[7px] h-[22px] w-px shrink-0 bg-[#333]" />
      <Clipped text="Coordinate" className="ml-[18px] w-[88px]" shift="-ml-[23px]" />
      <div className={"ml-[8px] flex h-10 w-[234px] shrink-0 items-center justify-center border border-t-2 border-[#a8a8a8] bg-white " + fieldText}>235310,978377</div>
      <div className="ml-0.5 flex h-[52px] w-[51px] shrink-0 items-center justify-center border-2 border-[#ababab] bg-[#f0f0f0]">
        <svg width="32" height="34" viewBox="0 0 32 34" fill="none" stroke="#111">
          <path d="M5 5c2-4 9-4 11 0l6 12c1 4-8 9-12 5L4 12c-1-2 0-5 1-7z" fill="#ccc" strokeWidth="3" />
          <path d="m10 3 2 9M5 11l6 7M12 13l6-2" strokeWidth="3" />
          <circle cx="18" cy="25" r="7" fill="#fff" strokeWidth="2.200" />
          <circle cx="19" cy="25" r="2" strokeWidth="1.800" />
          <path d="M22 6v3M27 3v3M26 9h3M2 19v3M6 22v2" strokeWidth="2.200" />
        </svg>
      </div>
      <Clipped text="Scale" className="ml-[16px] w-[24px]" shift="-ml-[21px]" />
      <div className="-mt-[3px] ml-[7px] flex h-10 w-[225px] shrink-0 rounded-r-[6px] border-y border-l border-t-[#9a9a9a] border-b-[#9a9a9a] border-l-[#9a9a9a] bg-white">
        <span className={"flex grow items-center pl-[3px] tracking-[-0.1px] " + fieldText}>1:2223502</span>
        <span className="-my-px flex w-[34px] items-center justify-center rounded-r-[6px] bg-linear-to-b from-[#6ca6f8] to-[#0a66f6]">
          <svg width="16" height="10" viewBox="0 0 16 10" fill="none"><path d="m1.500 1.500 6.500 6.500 6.500-6.500" stroke="#fff" strokeWidth="2.800" /></svg>
        </span>
      </div>
      <div className="-mt-1 ml-[2px] flex h-[52px] w-[51px] shrink-0 items-center justify-center border-2 border-[#ababab] bg-[#e6e6e6]">
        <svg width="26" height="32" viewBox="0 0 26 32" fill="none">
          <path d="M5.500 15V10a7.500 7.500 0 0 1 15 0v5" stroke="#7a7a7a" strokeWidth="4" />
          <path d="M5.500 15V10a7.500 7.500 0 0 1 15 0v5" stroke="#e0e0e0" strokeWidth="1.500" />
          <rect x="1" y="14.500" width="24" height="16" rx="1.500" fill="#636363" />
        </svg>
      </div>
      <Clipped text="Magnifier" className="ml-[18px] w-[69px]" shift="-ml-[23px]" />
      <div className={"ml-[9px] flex h-[42px] w-[156px] shrink-0 items-center border-[1.5px] border-[#a3a3a3] bg-white pl-[4px] tracking-[-0.8px] " + fieldText}>100%</div>
      <Stepper className="ml-[9px]" />
      <Clipped text="Rotation" className="ml-[21px] w-[56px]" shift="-ml-[25px]" />
      <div className={"ml-[22px] flex h-[42px] w-[148px] shrink-0 items-center border-[1.5px] border-[#a3a3a3] bg-white pl-1 tracking-[-0.5px] " + fieldText}>0.0 °</div>
      <Stepper className="ml-[9px]" />
      <div className="ml-[15px] flex size-7 shrink-0 items-center justify-center rounded-[6px] bg-[#3b87f7]">
        <svg width="18" height="19" viewBox="0 0 18 19" fill="none"><path d="m2 10 4.500 6L15.500 2" stroke="#fff" strokeWidth="2.800" strokeLinecap="round" strokeLinejoin="round" /></svg>
      </div>
      <span className={"ml-2 w-[88px] shrink-0 tracking-[-0.6px] " + fieldText}>Render</span>
      <div className="ml-1 flex h-[60px] w-[214px] shrink-0 items-center border-2 border-[#ababab] bg-linear-to-b from-[#e0e0e0] to-[#f4f4f4] pl-2">
        <svg width="32" height="30" viewBox="0 0 32 30" fill="none" stroke="#777" strokeWidth="1.600" className="shrink-0">
          <circle cx="16" cy="15" r="12" />
          <ellipse cx="16" cy="15" rx="5.500" ry="12" />
          <path d="M16 3v24M4.500 20h23" />
          <path d="M11 2h10l9.500 12H1.500z" fill="#c8c8c8" />
          <path d="M7 7.500h18M11 2 7.500 14M16 2v12M21 2l3.500 12" />
        </svg>
        <span className={"ml-[8px] tracking-[-0.5px] " + fieldText}>EPSG:5367</span>
      </div>
      <div className="ml-3 flex h-[60px] w-[51px] shrink-0 items-center justify-center border-2 border-[#ababab] bg-linear-to-b from-[#e0e0e0] to-[#f4f4f4]">
        <svg width="34" height="32" viewBox="0 0 34 32">
          <path d="M17 1C8 1 1 6.500 1 13.500S8 26 17 26c1 3 5 5 12 5-4-2-5-4-4.500-6.500C30 22.500 33 18 33 13.500 33 6.500 26 1 17 1z" fill="#666" />
          <circle cx="9.500" cy="13.500" r="2.200" fill="#fff" /><circle cx="17" cy="13.500" r="2.200" fill="#fff" /><circle cx="24.500" cy="13.500" r="2.200" fill="#fff" />
        </svg>
      </div>
    </div>
  );
}

/* ------------------------------------------------------------------ */

export default function App() {
  return (
    <div className="flex h-[1592px] w-[2180px] flex-col overflow-hidden border-l-2 border-[#9f9f9f] bg-[#d4d4d4] font-['Inter','Noto_Sans',sans-serif] leading-none text-black">
      <div className="h-1 shrink-0 border-b border-[#999] bg-[#cdcdcd]" />
      <ToolRow>
        <Segment className="-ml-px">
          <Tool><NewIcon /></Tool>
          <Tool><FolderOpenIcon /></Tool>
          <Tool><SaveIcon /></Tool>
          <Tool><SaveAsIcon /></Tool>
          <Tool><LayoutIcon /></Tool>
          <Tool><LayoutManagerIcon /></Tool>
        </Segment>
        <Segment>
          <Tool><HandIcon /></Tool>
          <Tool><PanIcon /></Tool>
          <Tool active><ZoomInIcon /></Tool>
          <Tool><ZoomOutIcon /></Tool>
          <Tool><ZoomNativeIcon /></Tool>
          <Tool><ZoomFullIcon /></Tool>
          <Tool><ZoomSelectionIcon /></Tool>
          <Tool><ZoomLayerIcon /></Tool>
          <Tool><ZoomHistory /></Tool>
          <Tool><ZoomHistory faded /></Tool>
          <Tool><MapSheet badge /></Tool>
          <Tool><MapSheet bookmark badge /></Tool>
          <Tool><MapSheet bookmark /></Tool>
          <Tool><RefreshIcon /></Tool>
        </Segment>
        <Segment last>
          <Tool><IdentifyIcon /></Tool>
          <MenuTool><ActionIcon /></MenuTool>
          <MenuTool><SelectIcon /></MenuTool>
          <MenuTool><SelectValueIcon /></MenuTool>
          <Tool><DeselectIcon /></Tool>
          <Tool><TableIcon /></Tool>
          <More className="mr-[7px] ml-auto" />
        </Segment>
      </ToolRow>
      <ToolRow>
        <Segment className="-ml-px">
          <Tool><AddLayerIcon /></Tool>
          <Tool><BoxIcon badge /></Tool>
          <Tool><NewVectorIcon /></Tool>
          <Tool><FeatherIcon badge /></Tool>
          <Tool><ChipIcon /></Tool>
        </Segment>
        <Segment>
          <div className="relative flex">
            <Tool><CurrentEditsIcon /></Tool>
            <svg width="14" height="10" viewBox="0 0 14 10" className="absolute right-[6px] bottom-[9px]"><path d="M0 0h14L7 10z" fill="#8a8a8a" /></svg>
          </div>
          <Tool><PencilIcon /></Tool>
          <Tool><SaveEditsIcon /></Tool>
          <Tool><AddPolygonIcon /></Tool>
          <Tool><VertexIcon /></Tool>
          <Tool><MultiEditIcon /></Tool>
          <Tool><TrashIcon /></Tool>
          <Tool><ScissorsIcon /></Tool>
          <Tool><CopyIcon /></Tool>
          <Tool><PasteIcon /></Tool>
          <Tool><UndoIcon /></Tool>
          <Tool><UndoIcon flip /></Tool>
        </Segment>
        <Segment>
          <Tool><LabelIcon /></Tool>
          <Tool><DiagramIcon /></Tool>
          <Tool><LabelPinBoxIcon /></Tool>
          <Tool><LabelPinIcon /></Tool>
          <span className="flex w-[70px] justify-center pl-[30px]"><More /></span>
        </Segment>
        <Segment><Tool><MetaSearchIcon /></Tool></Segment>
        <Segment><Tool><PythonIcon /></Tool></Segment>
        <Segment><Tool><HelpIcon /></Tool></Segment>
        <Segment />
        <Segment last>
          <Tool><QuickMapIcon /></Tool>
          <More className="mr-[7px] ml-auto" />
        </Segment>
      </ToolRow>
      <div className="flex min-h-0 grow bg-[#ececec]">
        <SidePanels />
        <MapCanvas />
      </div>
      <StatusBar />
    </div>
  );
}
